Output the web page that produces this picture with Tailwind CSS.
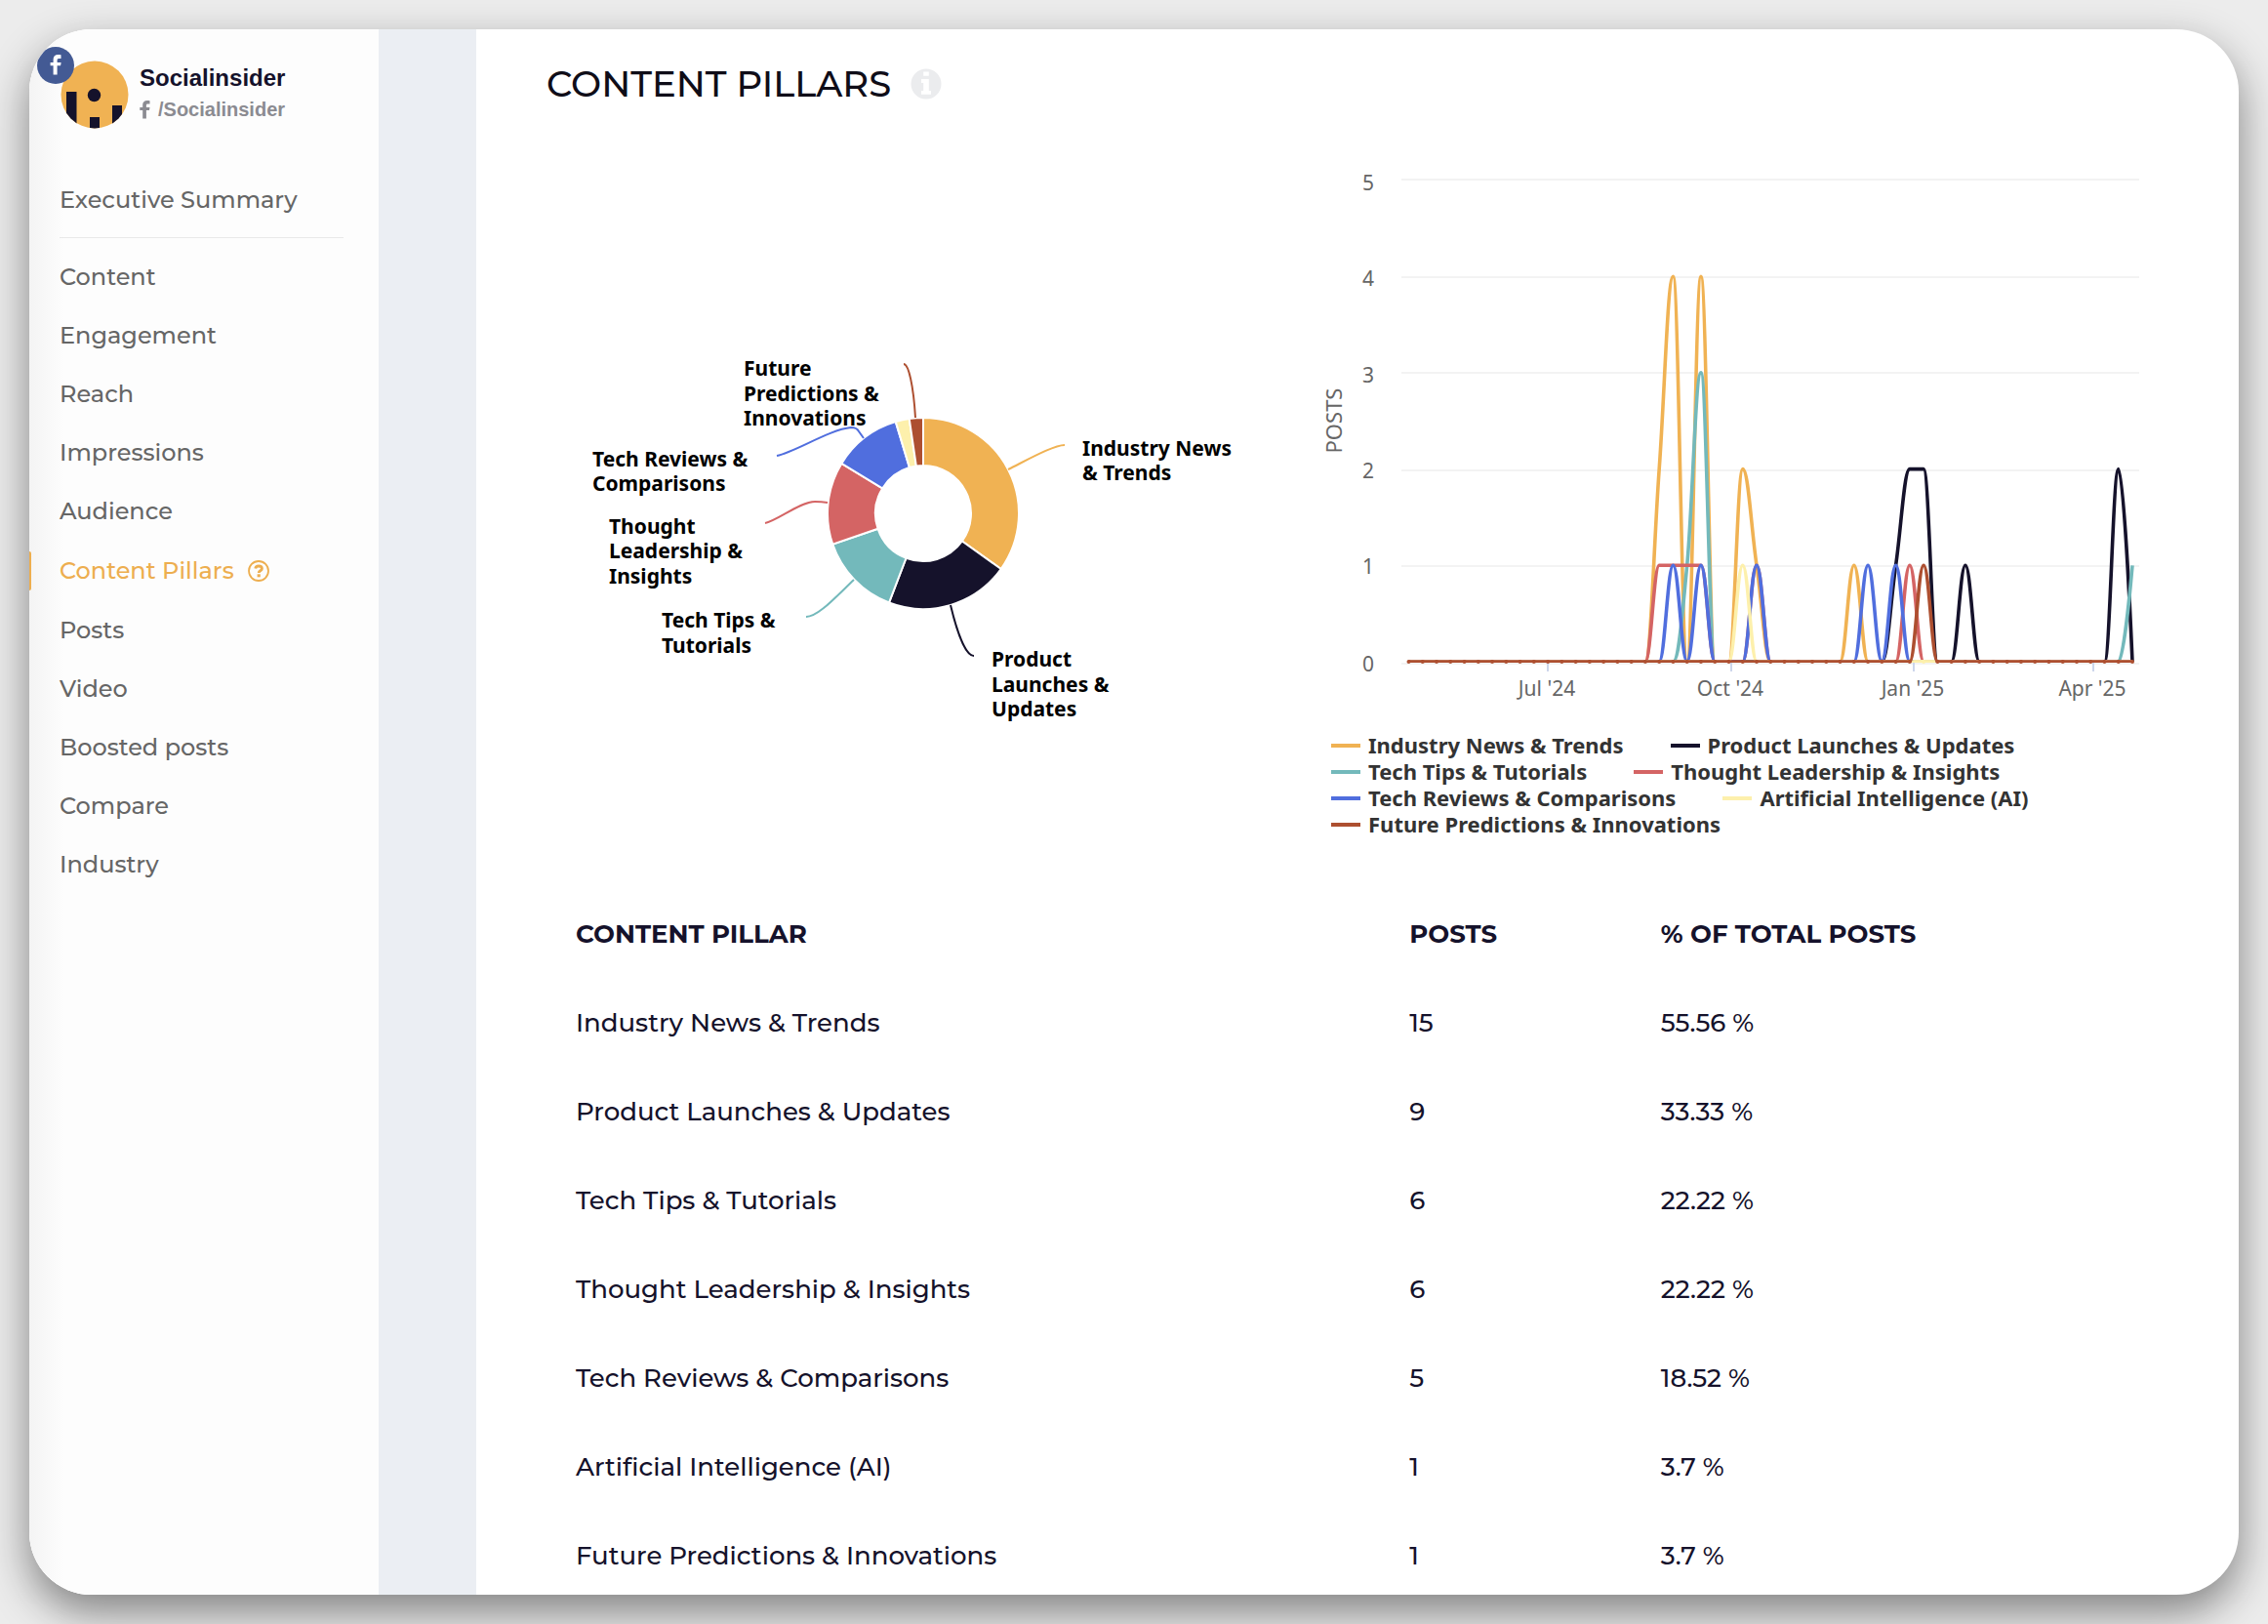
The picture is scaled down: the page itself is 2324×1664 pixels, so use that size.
<!DOCTYPE html>
<html lang="en">
<head>
<meta charset="utf-8">
<meta name="viewport" content="width=device-width, initial-scale=1">
<title>Content Pillars</title>
<script src="https://cdn.jsdelivr.net/npm/@tailwindcss/browser@4"></script>
</head>
<body class="min-h-screen bg-[#ececec] p-[30px] font-['Montserrat','Inter',sans-serif] font-medium text-[#15122b]">
<div class="flex h-[calc(100vh-60px)] overflow-hidden rounded-[64px] bg-white shadow-[0_18px_44px_rgba(0,0,0,0.45)]">

  <aside class="w-[358px] shrink-0 bg-[#fdfdfd] bg-linear-to-r from-[#f4f4f4] to-[#fdfdfd] to-[36px]">
    <div class="flex items-center gap-[11px] pt-8 pl-8">
      <div class="relative size-[70px] shrink-0">
        <svg viewBox="0 0 70 70" class="size-full" aria-hidden="true">
          <clipPath id="avatar"><circle cx="35" cy="35" r="34.5"/></clipPath>
          <g clip-path="url(#avatar)">
            <rect width="70" height="70" fill="#f0b253"/>
            <g fill="#15122b"><rect x="6" y="32" width="10.500" height="38"/><rect x="30" y="58" width="10" height="12"/><rect x="53" y="46" width="10" height="24"/><circle cx="34.500" cy="35.500" r="6.700"/></g>
          </g>
        </svg>
        <svg viewBox="0 0 38 38" class="absolute -top-[14px] -left-6 size-[38px]" aria-hidden="true">
          <circle cx="19" cy="19" r="19" fill="#435a94"/>
          <path d="M24.500 8.300v3.600h-2.200c-1.400 0-1.700.7-1.700 1.800v2.200h4l-.5 3.400h-3.500v9.300h-4v-9.300h-3v-3.400h3v-2.800c0-3.300 1.900-5 4.900-5 1.300 0 2.500.1 3 .2z" fill="#fff"/>
        </svg>
      </div>
      <div class="pb-[2px]">
        <p class="font-['Liberation_Sans',sans-serif] text-2xl leading-8 font-bold">Socialinsider</p>
        <a href="#" class="flex items-center gap-2 font-['Liberation_Sans',sans-serif] text-xl leading-8 font-bold text-[#8b8b91]">
          <svg viewBox="0 0 11 19" class="h-[19px] w-[11px]" aria-hidden="true"><path d="M10.500.2v3.200h-2c-1.300 0-1.600.6-1.600 1.600v2h3.600l-.5 3.100H6.900V18.600H3.200V10.100H.3V7h2.900V4.500C3.200 1.600 5 0 7.800 0c1.200 0 2.300.1 2.700.2z" fill="currentColor"/></svg>
          /Socialinsider
        </a>
      </div>
    </div>

    <nav class="mt-[43px] text-2xl text-[#666]">
      <a href="#" class="flex h-[60px] items-center px-[31px]">Executive Summary</a>
      <hr class="mt-2 mr-9 mb-[10px] ml-[31px] border-[#e8e8e8]">
      <a href="#" class="flex h-[60px] items-center px-[31px]">Content</a>
      <a href="#" class="flex h-[60px] items-center px-[31px]">Engagement</a>
      <a href="#" class="flex h-[60px] items-center px-[31px]">Reach</a>
      <a href="#" class="flex h-[60px] items-center px-[31px]">Impressions</a>
      <a href="#" class="flex h-[60px] items-center px-[31px]">Audience</a>
      <a href="#" aria-current="page" class="flex h-[62px] items-center text-[#edae4f]">
        <span class="h-10 w-[2px] rounded-r bg-[#edae4f]"></span>
        <span class="pr-[14px] pl-[29px]">Content Pillars</span>
        <svg viewBox="0 0 22 22" class="size-[22px]" fill="none" stroke="currentColor" aria-hidden="true"><circle cx="11" cy="11" r="10" stroke-width="1.800"/><path d="M7.700 8.600C8 7 9.200 6 11 6c2 0 3.400 1 3.400 2.700 0 2.100-3.200 2-3.200 4.300" stroke-width="2.800"/><path d="M9.600 14.300h3.200v3H9.600z" fill="currentColor" stroke="none"/></svg>
      </a>
      <a href="#" class="flex h-[60px] items-center px-[31px]">Posts</a>
      <a href="#" class="flex h-[60px] items-center px-[31px]">Video</a>
      <a href="#" class="flex h-[60px] items-center px-[31px]">Boosted posts</a>
      <a href="#" class="flex h-[60px] items-center px-[31px]">Compare</a>
      <a href="#" class="flex h-[60px] items-center px-[31px]">Industry</a>
    </nav>
  </aside>

  <div class="w-[100px] shrink-0 bg-[#ebeef3]"></div>

  <main class="min-w-0 flex-1 px-[72px] pt-9">
    <h1 class="flex h-10 items-center gap-5 text-[37px] text-[#0f0d18]">CONTENT PILLARS
      <svg viewBox="0 0 32 32" class="size-8" aria-label="Info"><circle cx="16" cy="16" r="15.500" fill="#ebecee"/><path d="M13.200 3.500h5.600v4.300h-5.600zM11 11h7.800v12H21v3.800H11V23h2.200v-8H11z" fill="#fff"/></svg>
    </h1>

    <div class="mt-[54px] grid grid-cols-[780fr_882fr] items-start">
      <svg viewBox="560 160 780 580" class="w-full font-['Lucida_Grande','Noto_Sans',sans-serif]" role="img" aria-label="Share of posts by content pillar">
        <g id="slices" stroke="#fff" stroke-width="2"></g>
        <g fill="none" stroke-width="2">
          <path stroke="#ad4f30" d="M926 373c5 0 10 22 12 55"/>
          <path stroke="#506ede" d="M796 467C815 463 850 440 872 438Q878 438 880 442L885 449"/>
          <path stroke="#d46464" d="M784 536C796 534 820 514 835 514Q842 514 848 515"/>
          <path stroke="#73b9bb" d="M826 632C838 632 855 613 875 594"/>
          <path stroke="#f0b253" d="M1091 456C1080 456 1055 470 1033 481"/>
          <path stroke="#15122b" d="M998 672C989 672 980 645 974 620"/>
        </g>
        <g font-size="21" font-weight="700" fill="#000">
          <text y="385"><tspan x="762">Future</tspan><tspan x="762" dy="26">Predictions &amp;</tspan><tspan x="762" dy="25">Innovations</tspan></text>
          <text y="467"><tspan x="1109">Industry News</tspan><tspan x="1109" dy="25">&amp; Trends</tspan></text>
          <text y="478"><tspan x="607">Tech Reviews &amp;</tspan><tspan x="607" dy="25">Comparisons</tspan></text>
          <text y="547"><tspan x="624">Thought</tspan><tspan x="624" dy="25">Leadership &amp;</tspan><tspan x="624" dy="26">Insights</tspan></text>
          <text y="643"><tspan x="678">Tech Tips &amp;</tspan><tspan x="678" dy="26">Tutorials</tspan></text>
          <text y="683"><tspan x="1016">Product</tspan><tspan x="1016" dy="26">Launches &amp;</tspan><tspan x="1016" dy="25">Updates</tspan></text>
        </g>
      </svg>

      <div>
        <svg viewBox="1340 160 882 580" class="w-full font-['Lucida_Grande','Noto_Sans',sans-serif]" role="img" aria-label="Posts per week by content pillar">
          <clipPath id="plot"><rect x="1436" y="184" width="756" height="495"/></clipPath>
          <path stroke="#f3f3f3" stroke-width="2" d="M1436 184H2192M1436 284H2192M1436 382H2192M1436 482H2192M1436 580H2192M1436 680H2192"/>
          <path stroke="#ccd6eb" stroke-width="2" d="M1586 679v9M1774 679v9M1961 679v9M2145 679v9"/>
          <g font-size="21" font-weight="400" fill="#666" text-anchor="middle">
            <text x="1402" y="195">5</text><text x="1402" y="293">4</text><text x="1402" y="392">3</text><text x="1402" y="490">2</text><text x="1402" y="588">1</text><text x="1402" y="688">0</text>
            <text x="1585" y="713">Jul '24</text><text x="1773" y="713">Oct '24</text><text x="1960" y="713">Jan '25</text><text x="2144" y="713">Apr '25</text>
            <text transform="translate(1375 431) rotate(-90)" font-size="22">POSTS</text>
          </g>
          <g id="lines" clip-path="url(#plot)" fill="none" stroke-width="3.600" stroke-linejoin="round"></g>
          <g id="dots"></g>
        </svg>

        <ul class="flex flex-wrap gap-x-12 pt-[10px] pl-6 font-['Lucida_Grande','Noto_Sans',sans-serif] text-[22px] leading-[27px] font-bold text-[#333]">
          <li><button class="flex items-center gap-2"><span class="h-[4px] w-[30px] bg-[#f0b253]"></span>Industry News &amp; Trends</button></li>
          <li><button class="flex items-center gap-2"><span class="h-[4px] w-[30px] bg-[#15122b]"></span>Product Launches &amp; Updates</button></li>
          <li><button class="flex items-center gap-2"><span class="h-[4px] w-[30px] bg-[#73b9bb]"></span>Tech Tips &amp; Tutorials</button></li>
          <li><button class="flex items-center gap-2"><span class="h-[4px] w-[30px] bg-[#d46464]"></span>Thought Leadership &amp; Insights</button></li>
          <li><button class="flex items-center gap-2"><span class="h-[4px] w-[30px] bg-[#506ede]"></span>Tech Reviews &amp; Comparisons</button></li>
          <li><button class="flex items-center gap-2"><span class="h-[4px] w-[30px] bg-[#fdf0ac]"></span>Artificial Intelligence (AI)</button></li>
          <li><button class="flex items-center gap-2"><span class="h-[4px] w-[30px] bg-[#ad4f30]"></span>Future Predictions &amp; Innovations</button></li>
        </ul>
      </div>
    </div>

    <table class="mt-[54px] w-full table-fixed text-left text-[26px]">
      <colgroup><col class="w-[53.2%]"><col class="w-[15.5%]"><col></colgroup>
      <thead><tr class="h-[91px]"><th class="pl-[30px] font-bold">CONTENT PILLAR</th><th class="font-bold">POSTS</th><th class="font-bold">% OF TOTAL POSTS</th></tr></thead>
      <tbody>
        <tr class="h-[91px]"><td class="pl-[30px]">Industry News &amp; Trends</td><td>15</td><td>55.56 %</td></tr>
        <tr class="h-[91px]"><td class="pl-[30px]">Product Launches &amp; Updates</td><td>9</td><td>33.33 %</td></tr>
        <tr class="h-[91px]"><td class="pl-[30px]">Tech Tips &amp; Tutorials</td><td>6</td><td>22.22 %</td></tr>
        <tr class="h-[91px]"><td class="pl-[30px]">Thought Leadership &amp; Insights</td><td>6</td><td>22.22 %</td></tr>
        <tr class="h-[91px]"><td class="pl-[30px]">Tech Reviews &amp; Comparisons</td><td>5</td><td>18.52 %</td></tr>
        <tr class="h-[91px]"><td class="pl-[30px]">Artificial Intelligence (AI)</td><td>1</td><td>3.7 %</td></tr>
        <tr class="h-[91px]"><td class="pl-[30px]">Future Predictions &amp; Innovations</td><td>1</td><td>3.7 %</td></tr>
      </tbody>
    </table>
  </main>
</div>

<script>
const NS = 'http://www.w3.org/2000/svg';
function add(id, tag, attrs) {
  const el = document.createElementNS(NS, tag);
  for (const k in attrs) el.setAttribute(k, attrs[k]);
  document.getElementById(id).appendChild(el);
}

// Posts per pillar; weeks maps a week index to its post count.
const pillars = [
  { color: '#f0b253', posts: 15, weeks: { 18: 2, 19: 4, 21: 4, 24: 2, 25: 1, 32: 1 } },
  { color: '#15122b', posts: 9, weeks: { 35: 1, 36: 2, 37: 2, 40: 1, 51: 2 } },
  { color: '#73b9bb', posts: 6, weeks: { 20: 1, 21: 3, 52: 1 } },
  { color: '#d46464', posts: 6, weeks: { 18: 1, 19: 1, 20: 1, 21: 1, 25: 1, 36: 1 } },
  { color: '#506ede', posts: 5, weeks: { 19: 1, 21: 1, 25: 1, 33: 1, 35: 1 } },
  { color: '#fdf0ac', posts: 1, weeks: { 24: 1 } },
  { color: '#ad4f30', posts: 1, weeks: { 37: 1 } },
];

// Donut
const cx = 946, cy = 526, R = 98, r = 49;
const total = pillars.reduce((s, p) => s + p.posts, 0);
let a = -Math.PI / 2;
for (const p of pillars) {
  const b = a + p.posts / total * 2 * Math.PI;
  const pt = (rad, t) => (cx + rad * Math.cos(t)) + ' ' + (cy + rad * Math.sin(t));
  add('slices', 'path', { fill: p.color,
    d: `M${pt(R, a)}A${R} ${R} 0 0 1 ${pt(R, b)}L${pt(r, b)}A${r} ${r} 0 0 0 ${pt(r, a)}Z` });
  a = b;
}

// Spline chart: control points are kept between neighbouring values.
const LAST = 52, X = i => 1443.5 + 14.26 * i, Y = v => 678 - 98.7 * v;
function spline(pts) {
  let d = `M${pts[0][0]} ${pts[0][1]}`, prev = pts[0];
  for (let i = 1; i < pts.length; i++) {
    const [x, y] = pts[i], [lx, ly] = pts[i - 1];
    let L = [x, y], N = [x, y];
    if (i < pts.length - 1) {
      const [nx, ny] = pts[i + 1];
      L = [(1.5 * x + lx) / 2.5, (1.5 * y + ly) / 2.5];
      N = [(1.5 * x + nx) / 2.5, (1.5 * y + ny) / 2.5];
      const c = (N[1] - L[1]) * (N[0] - x) / (N[0] - L[0]) + y - N[1];
      L[1] += c; N[1] += c;
      if (L[1] > ly && L[1] > y) { L[1] = Math.max(ly, y); N[1] = 2 * y - L[1]; }
      else if (L[1] < ly && L[1] < y) { L[1] = Math.min(ly, y); N[1] = 2 * y - L[1]; }
      if (N[1] > ny && N[1] > y) { N[1] = Math.max(ny, y); L[1] = 2 * y - N[1]; }
      else if (N[1] < ny && N[1] < y) { N[1] = Math.min(ny, y); L[1] = 2 * y - N[1]; }
    }
    d += `C${prev[0]} ${prev[1]} ${L[0]} ${L[1]} ${x} ${y}`;
    prev = N;
  }
  return d;
}
for (const p of pillars) {
  const pts = [];
  for (let i = 0; i <= LAST; i++) pts.push([X(i), Y(p.weeks[i] || 0)]);
  add('lines', 'path', { stroke: p.color, d: spline(pts) });
}
const yellow = pillars[5].color, brown = pillars[6].color;
add('lines', 'path', { stroke: yellow, d: `M${X(36) + 4} 678H${X(38) - 3}` });
for (let i = 0; i <= LAST; i++) add('dots', 'circle', { cx: X(i), cy: 678, r: 2, fill: i === 37 ? yellow : brown });
</script>
</body>
</html>
